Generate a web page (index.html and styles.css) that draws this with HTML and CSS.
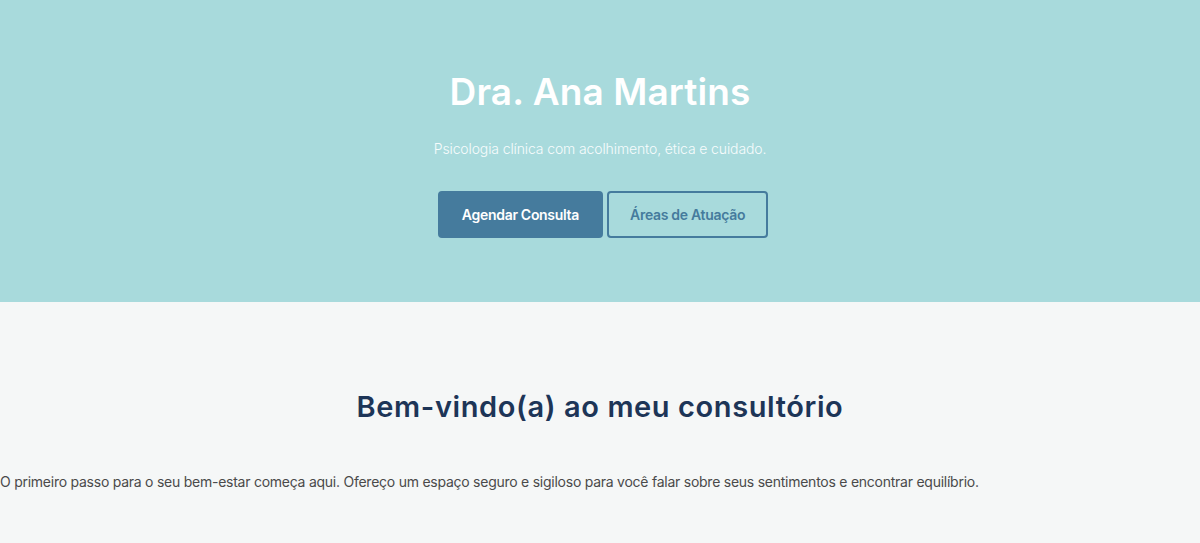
FILE: index.html
```html
<!DOCTYPE html>
<html lang="pt-BR">
<head>
<meta charset="utf-8">
<title>Dra. Ana Martins</title>
<link rel="stylesheet" href="styles.css">
</head>
<body>
<header class="hero">
  <h1 class="hero-title">Dra. Ana Martins</h1>
  <p class="hero-sub">Psicologia clínica com acolhimento, ética e cuidado.</p>
  <div class="hero-actions">
    <a class="btn btn-primary" href="#">Agendar Consulta</a>
    <a class="btn btn-outline" href="#">Áreas de Atuação</a>
  </div>
</header>
<section class="welcome">
  <h2 class="welcome-title">Bem-vindo(a) ao meu consultório</h2>
  <p class="welcome-text">O primeiro passo para o seu bem-estar começa aqui. Ofereço um espaço seguro e sigiloso para você falar sobre seus sentimentos e encontrar equilíbrio.</p>
</section>
</body>
</html>
```

FILE: styles.css
```css
* { box-sizing: border-box; }
html, body { margin: 0; padding: 0; }
body {
  font-family: Inter, "Open Sans", sans-serif;
  background: #f5f7f7;
  color: #444;
}
.hero {
  background: #a8dadc;
  height: 302px;
  padding-top: 70px;
  text-align: center;
}
.hero-title {
  margin: 0;
  font-size: 37px;
  line-height: 44px;
  font-weight: 600;
  letter-spacing: 0.1px;
  color: #ffffff;
}
.hero-sub {
  margin: 24px 0 0;
  font-size: 14px;
  line-height: 21px;
  font-weight: 300;
  letter-spacing: -0.12px;
  color: #f7fcfc;
}
.hero-actions {
  margin-top: 32px;
  display: flex;
  justify-content: center;
  gap: 4px;
  padding-left: 6px;
}
.btn {
  display: inline-flex;
  align-items: center;
  height: 47px;
  padding: 0 22px;
  border: 2px solid #457b9d;
  border-radius: 4px;
  font-size: 14px;
  font-weight: 600;
  letter-spacing: -0.3px;
  text-decoration: none;
}
.btn-primary {
  background: #457b9d;
  color: #ffffff;
}
.btn-outline {
  background: transparent;
  color: #457b9d;
  padding: 0 21px;
}
.welcome {
  padding-top: 88px;
}
.welcome-title {
  margin: 0;
  text-align: center;
  font-size: 29px;
  line-height: 34px;
  font-weight: 600;
  letter-spacing: 0.6px;
  color: #1d3557;
}
.welcome-text {
  margin: 47px 0 0;
  font-size: 14px;
  line-height: 21px;
  letter-spacing: -0.25px;
  color: #4a4a4a;
}
```
